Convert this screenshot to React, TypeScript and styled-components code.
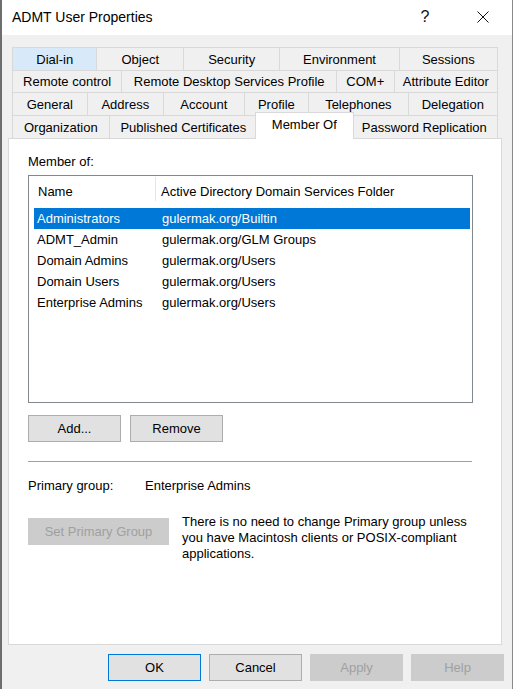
import React from 'react';
import styled, { createGlobalStyle } from 'styled-components';

const GlobalStyle = createGlobalStyle`
  html, body {
    margin: 0;
    padding: 0;
    background: #ffffff;
  }
  body {
    font-family: 'Liberation Sans', Arial, sans-serif;
    font-size: 13px;
    color: #000000;
  }
`;

const Window = styled.div`
  width: 510px;
  height: 689px;
  border-left: 2px solid #6e6e6e;
  border-right: 1px solid #8a8a8a;
  display: flex;
  flex-direction: column;
  overflow: hidden;
`;

const TitleBar = styled.div`
  height: 35px;
  background: #ffffff;
  display: flex;
  align-items: center;
  flex-shrink: 0;

  > .title {
    flex: 1;
    padding-left: 10px;
    font-size: 14px;
    margin-top: -2px;
  }
`;

const CaptionButton = styled.div`
  width: 58px;
  height: 35px;
  display: flex;
  align-items: center;
  justify-content: center;
  font-size: 16px;
  color: #111;
  margin-top: -2px;
`;

const Body = styled.div`
  flex: 1;
  background: #f0f0f0;
  padding: 12px 0 0 6px;
  display: flex;
  flex-direction: column;
`;

const TabStrip = styled.div`
  display: flex;
  flex-direction: column;
  margin: 0 14px 0 4px;
`;

const TabRow = styled.div<{ $height: number }>`
  display: flex;
  height: ${(p) => p.$height}px;
  border-top: 1px solid #d9d9d9;
  border-left: 1px solid #d9d9d9;
  box-sizing: border-box;
`;

const Tab = styled.div<{ $width: number; $hover?: boolean; $active?: boolean }>`
  width: ${(p) => p.$width}px;
  box-sizing: border-box;
  display: flex;
  align-items: center;
  justify-content: center;
  border-right: 1px solid #d9d9d9;
  background: ${(p) => (p.$hover ? '#d8eaf9' : '#f0f0f0')};
  white-space: nowrap;
  font-size: 13px;

  ${(p) =>
    p.$active &&
    `
    position: relative;
    z-index: 2;
    background: #ffffff;
    border: 1px solid #d9d9d9;
    border-bottom: none;
    margin: -4px -2px -1px -3px;
    width: ${p.$width + 4}px;
    height: calc(100% + 5px);
    padding-bottom: 4px;
  `}
`;

const Panel = styled.div`
  position: relative;
  z-index: 1;
  background: #ffffff;
  border: 1px solid #d9d9d9;
  margin-right: 10px;
  height: 507px;
  box-sizing: border-box;
  padding: 15px 0 0 19px;
  display: flex;
  flex-direction: column;
`;

const Label = styled.div`
  line-height: 16px;
  height: 16px;
`;

const ListBox = styled.div`
  margin-top: 5px;
  width: 445px;
  height: 228px;
  box-sizing: border-box;
  border: 1px solid #828790;
  padding: 0 2px 0 5px;
  display: flex;
  flex-direction: column;
`;

const HeaderRow = styled.div`
  height: 32px;
  display: flex;
  flex-shrink: 0;
`;

const HeaderCell = styled.div<{ $width?: number; $divider?: boolean }>`
  width: ${(p) => (p.$width ? `${p.$width}px` : 'auto')};
  flex: ${(p) => (p.$width ? 'none' : '1')};
  box-sizing: border-box;
  padding: 8px 0 0 ${(p) => (p.$divider ? 6 : 4)}px;
  line-height: 16px;
  white-space: nowrap;
  position: relative;

  ${(p) =>
    p.$divider &&
    `
    &::before {
      content: '';
      position: absolute;
      left: 0;
      top: 1px;
      height: 24px;
      border-left: 1px solid #e5e5e5;
    }
  `}
`;

const Row = styled.div<{ $selected?: boolean }>`
  height: 21px;
  display: flex;
  align-items: center;
  background: ${(p) => (p.$selected ? '#0078d7' : 'transparent')};
  color: ${(p) => (p.$selected ? '#ffffff' : '#000000')};
  white-space: nowrap;

  > .name {
    width: 121px;
    padding-left: 3px;
  }
  > .folder {
    flex: 1;
    padding-left: 4px;
  }
`;

const Button = styled.button<{ $width?: number; $default?: boolean }>`
  width: ${(p) => p.$width ?? 93}px;
  height: 27px;
  box-sizing: border-box;
  background: #e1e1e1;
  border: 1px solid ${(p) => (p.$default ? '#0078d7' : '#adadad')};
  font-family: 'Liberation Sans', Arial, sans-serif;
  font-size: 13px;
  color: #000000;
  padding: 0;
  flex-shrink: 0;

  &:disabled {
    background: #cccccc;
    border-color: #cccccc;
    color: #a0a0a0;
  }
`;

const ButtonRow = styled.div`
  display: flex;
  gap: 9px;
  margin-top: 12px;
`;

const Divider = styled.div`
  width: 444px;
  height: 1px;
  background: #a0a0a0;
  margin-top: 19px;
`;

const InfoRow = styled.div`
  display: flex;
  margin-top: 16px;
  line-height: 16px;

  > .key {
    width: 117px;
  }
`;

const PrimaryRow = styled.div`
  display: flex;
  gap: 13px;
  margin-top: 20px;
  align-items: flex-start;

  > button {
    margin-top: 4px;
  }
  > .note {
    line-height: 16px;
  }
`;

const Footer = styled.div`
  display: flex;
  justify-content: flex-end;
  gap: 8px;
  padding: 9px 8px 0 0;
`;

const tabRows = [
  {
    height: 23,
    tabs: [
      { label: 'Dial-in', width: 85, hover: true },
      { label: 'Object', width: 87 },
      { label: 'Security', width: 97 },
      { label: 'Environment', width: 120 },
      { label: 'Sessions', width: 99 },
    ],
  },
  {
    height: 22,
    tabs: [
      { label: 'Remote control', width: 110 },
      { label: 'Remote Desktop Services Profile', width: 216 },
      { label: 'COM+', width: 58 },
      { label: 'Attribute Editor', width: 104 },
    ],
  },
  {
    height: 23,
    tabs: [
      { label: 'General', width: 75 },
      { label: 'Address', width: 77 },
      { label: 'Account', width: 81 },
      { label: 'Profile', width: 65 },
      { label: 'Telephones', width: 100 },
      { label: 'Delegation', width: 90 },
    ],
  },
  {
    height: 23,
    tabs: [
      { label: 'Organization', width: 97 },
      { label: 'Published Certificates', width: 149 },
      { label: 'Member Of', width: 95, active: true },
      { label: 'Password Replication', width: 147 },
    ],
  },
];

const groups = [
  { name: 'Administrators', folder: 'gulermak.org/Builtin' },
  { name: 'ADMT_Admin', folder: 'gulermak.org/GLM Groups' },
  { name: 'Domain Admins', folder: 'gulermak.org/Users' },
  { name: 'Domain Users', folder: 'gulermak.org/Users' },
  { name: 'Enterprise Admins', folder: 'gulermak.org/Users' },
];

export default function App() {
  return (
    <>
      <GlobalStyle />
      <Window>
        <TitleBar>
          <div className="title">ADMT User Properties</div>
          <CaptionButton>?</CaptionButton>
          <CaptionButton>
            <svg width="12" height="12" viewBox="0 0 12 12">
              <path d="M0.5 0.5 L11.5 11.5 M11.5 0.5 L0.5 11.5" stroke="#111" strokeWidth="1" />
            </svg>
          </CaptionButton>
        </TitleBar>

        <Body>
          <TabStrip>
            {tabRows.map((row, i) => (
              <TabRow key={i} $height={row.height}>
                {row.tabs.map((t: any) => (
                  <Tab key={t.label} $width={t.width} $hover={t.hover} $active={t.active}>
                    {t.label}
                  </Tab>
                ))}
              </TabRow>
            ))}
          </TabStrip>

          <Panel>
            <Label>Member of:</Label>
            <ListBox>
              <HeaderRow>
                <HeaderCell $width={121}>Name</HeaderCell>
                <HeaderCell $divider>Active Directory Domain Services Folder</HeaderCell>
              </HeaderRow>
              {groups.map((g, i) => (
                <Row key={g.name} $selected={i === 0}>
                  <span className="name">{g.name}</span>
                  <span className="folder">{g.folder}</span>
                </Row>
              ))}
            </ListBox>

            <ButtonRow>
              <Button>Add...</Button>
              <Button>Remove</Button>
            </ButtonRow>

            <Divider />

            <InfoRow>
              <span className="key">Primary group:</span>
              <span>Enterprise Admins</span>
            </InfoRow>

            <PrimaryRow>
              <Button $width={141} disabled>
                Set Primary Group
              </Button>
              <div className="note">
                There is no need to change Primary group unless
                <br />
                you have Macintosh clients or POSIX-compliant
                <br />
                applications.
              </div>
            </PrimaryRow>
          </Panel>

          <Footer>
            <Button $default>OK</Button>
            <Button>Cancel</Button>
            <Button disabled>Apply</Button>
            <Button disabled>Help</Button>
          </Footer>
        </Body>
      </Window>
    </>
  );
}
